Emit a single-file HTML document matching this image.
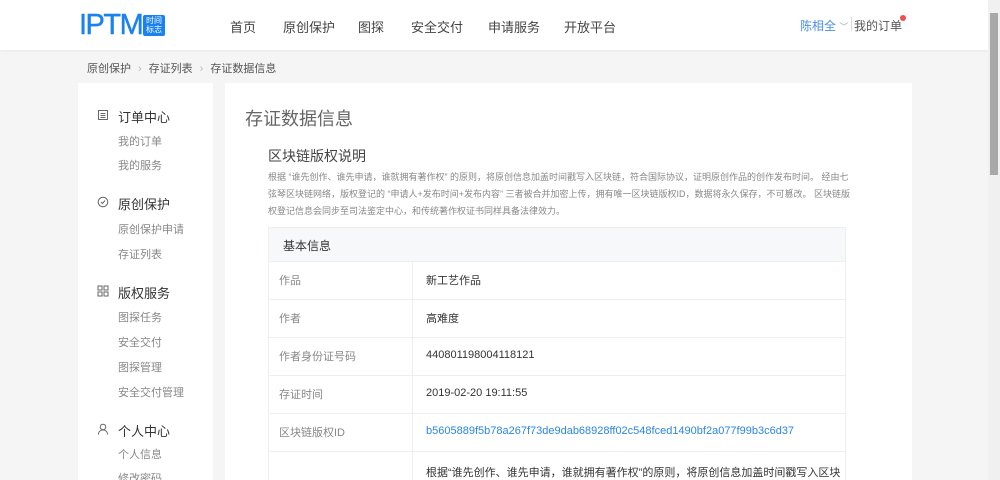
<!DOCTYPE html>
<html><head><meta charset="utf-8"><style>
*{margin:0;padding:0;box-sizing:border-box}
html,body{width:1000px;height:480px;overflow:hidden}
body{background:#f5f5f5;font-family:"Liberation Sans","Noto Sans CJK SC",sans-serif;position:relative;color:#333}
.a{position:absolute;white-space:nowrap}
.hdr{position:absolute;left:0;top:0;width:988px;height:50px;background:#fff;box-shadow:0 1px 3px rgba(0,0,0,.06)}
.nav{font-size:13px;color:#444;top:17px}
.side{position:absolute;left:78px;top:83px;width:135px;height:397px;background:#fff}
.main{position:absolute;left:225px;top:83px;width:687px;height:397px;background:#fff}
.h{font-size:13px;color:#333;left:118px}
.s{font-size:11px;color:#888;left:118px}
.p{font-size:9px;color:#888;left:268px;width:584px;line-height:17px;white-space:normal}
.tbl{position:absolute;left:268px;top:227px;width:578px;height:260px;border:1px solid #eee;overflow:hidden}
.row{position:absolute;left:0;width:576px;border-top:1px solid #eee}
.lab{position:absolute;left:10px;font-size:11px;color:#888}
.val{position:absolute;left:157px;font-size:11px;color:#333}
.vl{position:absolute;left:143px;top:33px;width:1px;height:230px;background:#eee}
</style></head><body>
<div class="hdr"></div>
<div class="a" style="left:79px;top:9px;font-size:29px;color:#1a82f0;letter-spacing:-1.5px;line-height:32px;-webkit-text-stroke:0.4px #1a82f0">IPTM</div>
<div class="a" style="left:143px;top:15px;width:22px;height:21px;background:#1a82f0;border-radius:2px;color:#fff;font-size:8px;line-height:9px;text-align:center;padding-top:1px">时间<br>标志</div>
<div class="a nav" style="left:230px">首页</div>
<div class="a nav" style="left:283px">原创保护</div>
<div class="a nav" style="left:358px">图探</div>
<div class="a nav" style="left:411px">安全交付</div>
<div class="a nav" style="left:488px">申请服务</div>
<div class="a nav" style="left:564px">开放平台</div>
<div class="a" style="left:800px;top:17px;font-size:12px;color:#4a90e2">陈相全 <span style="color:#aab;font-size:9px">﹀</span></div>
<div class="a" style="left:851px;top:17px;width:1px;height:14px;background:#ddd"></div>
<div class="a" style="left:854px;top:17px;font-size:12px;color:#555">我的订单</div>
<div class="a" style="left:900px;top:15px;width:6px;height:6px;border-radius:3px;background:#f05050"></div>
<div class="a" style="left:87px;top:60px;font-size:11px;color:#555">原创保护<span style="color:#bbb;margin:0 7px">›</span>存证列表<span style="color:#bbb;margin:0 7px">›</span>存证数据信息</div>
<div class="side"></div>
<svg class="a" style="left:97px;top:109px" width="12" height="12" viewBox="0 0 12 12" fill="none" stroke="#666" stroke-width="1"><rect x="1.5" y="1.5" width="9" height="9"/><path d="M3.5 4.5h5M3.5 6.5h5M3.5 8.5h5"/></svg>
<div class="a h" style="top:107px">订单中心</div>
<div class="a s" style="top:133px">我的订单</div><div class="a s" style="top:157px">我的服务</div>
<svg class="a" style="left:97px;top:196px" width="12" height="12" viewBox="0 0 12 12" fill="none" stroke="#666" stroke-width="1"><circle cx="6" cy="6" r="4.8"/><path d="M4 6l1.5 1.5L8 4.5"/></svg>
<div class="a h" style="top:194px">原创保护</div>
<div class="a s" style="top:221px">原创保护申请</div><div class="a s" style="top:246px">存证列表</div>
<svg class="a" style="left:97px;top:285px" width="12" height="12" viewBox="0 0 12 12" fill="none" stroke="#666" stroke-width="1"><rect x="1" y="1" width="4" height="4"/><rect x="7" y="1" width="4" height="4"/><rect x="1" y="7" width="4" height="4"/><rect x="7" y="7" width="4" height="4"/></svg>
<div class="a h" style="top:283px">版权服务</div>
<div class="a s" style="top:309px">图探任务</div><div class="a s" style="top:334px">安全交付</div><div class="a s" style="top:359px">图探管理</div><div class="a s" style="top:384px">安全交付管理</div>
<svg class="a" style="left:97px;top:423px" width="12" height="12" viewBox="0 0 12 12" fill="none" stroke="#666" stroke-width="1"><circle cx="6" cy="4" r="2.8"/><path d="M1.5 11.5c0-3 2-4.5 4.5-4.5s4.5 1.5 4.5 4.5"/></svg>
<div class="a h" style="top:421px">个人中心</div>
<div class="a s" style="top:446px">个人信息</div><div class="a s" style="top:470px">修改密码</div>
<div class="main"></div>
<div class="a" style="left:245px;top:105px;font-size:18px;color:#666">存证数据信息</div>
<div class="a" style="left:268px;top:146px;font-size:14px;color:#444">区块链版权说明</div>
<div class="a p" style="top:169px">根据 “谁先创作、谁先申请，谁就拥有著作权” 的原则，将原创信息加盖时间戳写入区块链，符合国际协议，证明原创作品的创作发布时间。 经由七弦琴区块链网络，版权登记的 “申请人+发布时间+发布内容” 三者被合并加密上传，拥有唯一区块链版权ID，数据将永久保存，不可篡改。 区块链版权登记信息会同步至司法鉴定中心，和传统著作权证书同样具备法律效力。</div>
<div class="tbl">
<div style="position:absolute;left:0;top:0;width:576px;height:33px;background:#f7f8fa"></div>
<div class="lab" style="top:9px;color:#333;font-size:12px;left:14px">基本信息</div>
<div class="vl"></div>
<div class="row" style="top:33px"><div class="lab" style="top:10px">作品</div><div class="val" style="top:10px">新工艺作品</div></div>
<div class="row" style="top:71px"><div class="lab" style="top:10px">作者</div><div class="val" style="top:10px">高难度</div></div>
<div class="row" style="top:109px"><div class="lab" style="top:10px">作者身份证号码</div><div class="val" style="top:11px">440801198004118121</div></div>
<div class="row" style="top:147px"><div class="lab" style="top:10px">存证时间</div><div class="val" style="top:11px">2019-02-20 19:11:55</div></div>
<div class="row" style="top:185px"><div class="lab" style="top:10px">区块链版权ID</div><div class="val" style="top:11px;color:#2b85e4">b5605889f5b78a267f73de9dab68928ff02c548fced1490bf2a077f99b3c6d37</div></div>
<div class="row" style="top:223px"><div class="val" style="top:12px">根据“谁先创作、谁先申请，谁就拥有著作权”的原则，将原创信息加盖时间戳写入区块</div></div>
</div>
<div class="a" style="left:988px;top:0;width:12px;height:480px;background:#f0f0f0"></div>
<div class="a" style="left:990px;top:13px;width:8px;height:162px;background:#a8a8a8"></div>
</body></html>
